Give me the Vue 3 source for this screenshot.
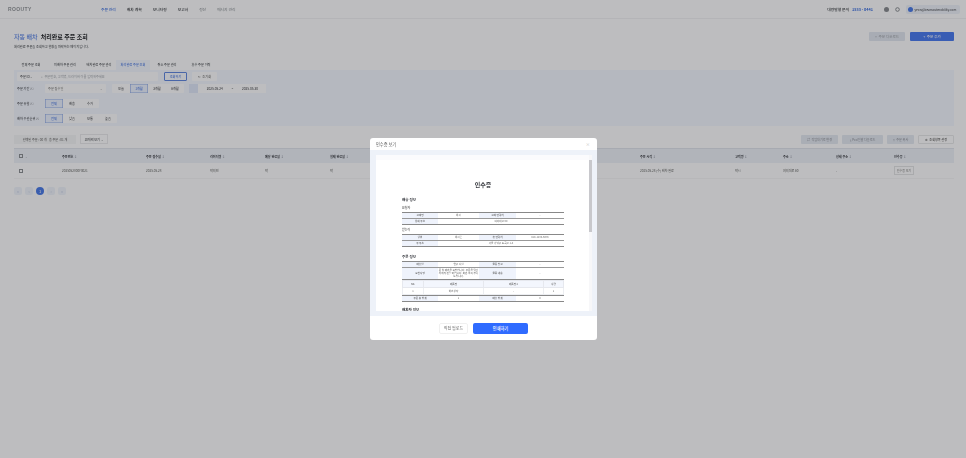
<template>
  <div class="screen">
    <div class="page">
      <header class="topbar">
        <div class="logo">ROOUTY</div>
        <nav class="nav">
          <a v-for="(n, i) in navItems" :key="n" :class="{ on: i === 0, dim: i > 3 }">{{ n }}</a>
        </nav>
        <div class="top-right">
          <span class="call">대량발행 문의 <b>1533 - 0441</b></span>
          <svg class="ico" viewBox="0 0 10 10"><circle cx="5" cy="5" r="5" fill="#8a8d93" /></svg>
          <svg class="ico" viewBox="0 0 10 10"><circle cx="5" cy="5" r="3.6" fill="none" stroke="#8a8d93" stroke-width="2" /></svg>
          <span class="user"><i class="avatar"></i>yeon@bearsoutmobility.com</span>
        </div>
      </header>

      <main class="content">
        <div class="title-row">
          <div>
            <h1><span>자동 배차</span> 처리완료 주문 조회</h1>
            <p>처리완료 주문을 조회하고 현황을 파악하는 페이지입니다.</p>
          </div>
          <div class="title-actions">
            <button class="btn-ghost">+ &nbsp;주문 다운로드</button>
            <button class="btn-primary">+ &nbsp;주문 추가</button>
          </div>
        </div>

        <div class="tabs">
          <span v-for="(t, i) in tabs" :key="t" :class="{ on: i === 3 }">{{ t }}</span>
        </div>

        <section class="filters">
          <div class="row">
            <div class="search">
              <span class="search-key">주문 ID <em>⌄</em></span>
              <span class="search-text">⌕ &nbsp;주문번호, 고객명, 드라이버 이름 입력해주세요</span>
            </div>
            <button class="btn-outline">조회하기</button>
            <button class="btn-reset">↻ &nbsp;초기화</button>
          </div>
          <div class="row">
            <label>주문 기간 ⓘ</label>
            <div class="select">주문 접수일 <em>⌄</em></div>
            <div class="seg">
              <span v-for="(s, i) in periods" :key="s" :class="{ on: i === 1 }">{{ s }}</span>
            </div>
            <div class="dates">
              <i class="cal"></i><span>2025.05.24</span><span>~</span><span>2025.05.30</span>
            </div>
          </div>
          <div class="row">
            <label>주문 유형 ⓘ</label>
            <div class="seg">
              <span v-for="(s, i) in types" :key="s" :class="{ on: i === 0 }">{{ s }}</span>
            </div>
          </div>
          <div class="row">
            <label>배차 우선순위 ⓘ</label>
            <div class="seg">
              <span v-for="(s, i) in priorities" :key="s" :class="{ on: i === 0 }">{{ s }}</span>
            </div>
          </div>
        </section>

        <div class="toolbar">
          <span class="count">선택된 주문 : 00 개 &nbsp; 총 주문 : 01 개</span>
          <span class="per-page">10개씩 보기 ⌄</span>
          <div class="tools">
            <button class="w36">⇄ &nbsp;작업대기로 변경</button>
            <button class="w41">⤓ &nbsp;Pod일괄 다운로드</button>
            <button class="w27">▯ &nbsp;주문 복사</button>
            <button class="plain">⚙ &nbsp;조회항목 설정</button>
          </div>
        </div>

        <div class="grid head">
          <span class="check-cell"><i class="check"></i><em>⌄</em></span>
          <span v-for="c in columns" :key="c">{{ c }} <em>↕</em></span>
        </div>
        <div class="grid body">
          <span class="check-cell"><i class="check"></i></span>
          <span v-for="(c, i) in cells" :key="i">{{ c }}</span>
          <span><button class="view">인수증 보기</button></span>
        </div>

        <div class="pager">
          <span>«</span><span>‹</span><span class="on">1</span><span>›</span><span>»</span>
        </div>
      </main>
    </div>

    <div class="dim-layer"></div>

    <div class="modal">
      <div class="modal-head">
        <span>인수증 보기</span>
        <em>×</em>
      </div>
      <div class="modal-body">
        <div class="paper">
          <h2>인수증</h2>
          <h3 class="first">배송 정보</h3>
          <h4>요청자</h4>
          <table class="t-doc">
            <tr><th>고객명</th><td>박시</td><th>고객 연락처</th><td>-</td></tr>
            <tr><th>상세 주소</th><td colspan="3">여의대로 60</td></tr>
          </table>
          <h4>받는이</h4>
          <table class="t-doc">
            <tr><th>성함</th><td>박시온</td><th>휴 연락처</th><td>010-1234-5678</td></tr>
            <tr><th>주 주소</th><td colspan="3">서울 강남구 도곡로 1-4</td></tr>
          </table>
          <h3 class="gap">주문 정보</h3>
          <table class="t-doc">
            <tr><th>배송일</th><td>연구 시설</td><th>물류 창고</th><td>-</td></tr>
            <tr class="tall"><th>요청사항</th><td>문 앞 배송을 요청합니다. 주문을 담당자에게 전달 바랍니다. 파손 주의 부탁드립니다.</td><th>물품 내용</th><td>-</td></tr>
          </table>
          <table class="t-items">
            <tr><th>No.</th><th>제품명</th><th>제품명 2</th><th>수량</th></tr>
            <tr><td>1</td><td>박스상자</td><td>-</td><td>1</td></tr>
          </table>
          <table class="t-doc t-sum">
            <tr><th>주문 총 합계</th><td>1</td><th>배송 합계</th><td>0</td></tr>
          </table>
          <h3 class="gap2">배차자 정보</h3>
        </div>
        <div class="scrollbar"><i></i></div>
      </div>
      <div class="modal-foot">
        <button class="foot-ghost">직접 업로드</button>
        <button class="foot-main">인쇄하기</button>
      </div>
    </div>
  </div>
</template>

<script setup>
const navItems = ["주문 관리", "배차 계획", "모니터링", "보고서", "정산", "메시지 관리"];
const tabs = ["전체 주문 조회", "미배차 주문 관리", "배차완료 주문 관리", "처리완료 주문 조회", "취소 주문 관리", "휴수 주문 이력"];
const periods = ["오늘", "1개월", "3개월", "6개월"];
const types = ["전체", "배송", "수거"];
const priorities = ["전체", "낮음", "보통", "높음"];
const columns = ["주문번호", "주문 접수일", "라이더명", "예상 완료일", "실제 완료일", "배차 완료일", "배송 시작일", "배송 완료일", "주문 시각", "고객명", "주소", "상세 주소", "인수증"];
const cells = ["2025052800F0021", "2025.05.28", "박의민", "박", "박", "2025.05.28", "2025.05.28", "2025.05.28", "2025.05.28 (수) 배차 완료", "박시", "여의대로 60", "-"];
</script>

<style>
html, body { margin: 0; background: #bcbdc1; }
</style>

<style scoped>
.screen {
  position: relative;
  width: 966px;
  height: 458px;
  overflow: hidden;
  font-family: "Noto Sans CJK KR", "Noto Sans", sans-serif;
  color: #3a3c42;
}
.page {
  width: 966px;
  height: 458px;
  background: #fcfdff;
  filter: blur(0.6px);
}
button { font-family: inherit; border: 0; padding: 0; }
em { font-style: normal; }

.topbar {
  display: flex;
  align-items: center;
  height: 18px;
  padding: 0 6px 0 8px;
  border-bottom: 1px solid #f0f1f4;
  font-size: 3.8px;
}
.logo { width: 93px; font: 700 5px "Liberation Sans", sans-serif; letter-spacing: 0.4px; color: #93969c; }
.nav { display: flex; gap: 11px; font-weight: 500; }
.nav a.on { color: #3d6fe0; }
.nav a.dim { color: #9a9da3; }
.top-right { margin-left: auto; display: flex; align-items: center; gap: 6px; }
.call { margin-right: 5px; font-weight: 500; white-space: nowrap; }
.call b { color: #3d6fe0; margin-left: 2px; }
.ico { width: 5px; height: 5px; }
.user { display: flex; align-items: center; gap: 1.5px; width: 54px; height: 9px; padding: 0 2px; box-sizing: border-box; background: #edf1fa; border-radius: 2px; font-size: 3.1px; white-space: nowrap; overflow: hidden; }
.avatar { width: 5px; height: 5px; flex: none; border-radius: 50%; background: #4d7ce8; }

.content { padding: 0 12px 0 14px; }
.title-row { display: flex; justify-content: space-between; height: 41px; padding-top: 13px; box-sizing: border-box; }
h1 { margin: 0; font-size: 6px; line-height: 9px; font-weight: 700; color: #24262b; }
h1 span { color: #5a83e6; font-weight: 500; margin-right: 2px; }
.title-row p { margin: 3px 0 0; font-size: 3.2px; line-height: 5px; }
.title-actions { display: flex; gap: 5px; }
.btn-ghost { width: 36px; height: 9px; border-radius: 1px; background: #e1e6f0; color: #a2a6ae; font-size: 3.6px; }
.btn-primary { width: 44px; height: 9px; border-radius: 1px; background: #4d7cf0; color: #fff; font-size: 3.6px; }

.tabs { display: flex; height: 10px; font-size: 3.2px; line-height: 10px; }
.tabs span { width: 34px; text-align: center; background: #fcfdff; }
.tabs span.on { color: #3d6fe0; background: #f2f6ff; }

.filters { height: 56px; box-sizing: border-box; padding: 2px 3px 0; background: #f2f6ff; font-size: 3.2px; }
.row { display: flex; align-items: center; height: 9px; margin-bottom: 6px; gap: 6px; }
.row:first-child { margin-bottom: 3px; }
.row label { width: 22px; white-space: nowrap; }
.search { display: flex; align-items: center; width: 141px; height: 9px; background: #fdfdff; border-radius: 1px; }
.search-key { width: 24px; padding-left: 3px; box-sizing: border-box; white-space: nowrap; }
.search-text { color: #a5a9b1; }
.btn-outline { width: 23px; height: 9px; background: #f6f9ff; border: 0.7px solid #6288e0; border-radius: 1px; font-size: 3.2px; color: #3d6fe0; }
.btn-reset { width: 25px; height: 9px; margin-left: -1px; background: #fdfdff; border-radius: 1px; font-size: 3.2px; color: #666; }
.select { display: flex; justify-content: space-between; align-items: center; width: 61px; height: 9px; padding: 0 3px; box-sizing: border-box; background: #fdfdff; border-radius: 1px; color: #777; }
.seg { display: flex; background: #fdfdff; border-radius: 1px; }
.seg span { width: 18px; height: 9px; line-height: 9px; text-align: center; }
.seg span.on { background: #eaf0ff; color: #3d6fe0; box-shadow: inset 0 0 0 0.6px #8fabe8; }
.dates { display: flex; align-items: center; justify-content: space-between; width: 77px; height: 9px; margin-left: -1px; padding-right: 8px; box-sizing: border-box; background: #fdfdff; }
.cal { width: 9px; height: 9px; background: #dfe7fa; }

.toolbar { display: flex; align-items: center; height: 10px; margin-top: 8px; font-size: 3.1px; }
.count { width: 62px; height: 9px; line-height: 9px; text-align: center; background: #f3f4f7; color: #666; white-space: nowrap; }
.per-page { width: 28px; height: 10px; margin-left: 4px; line-height: 10px; text-align: center; border: 0.5px solid #e8e9ec; box-sizing: border-box; }
.tools { margin-left: auto; display: flex; gap: 4px; }
.tools button { height: 9px; border-radius: 1px; background: #e3e8f2; color: #93969f; font-size: 3.1px; white-space: nowrap; }
.tools .w36 { width: 37px; }
.tools .w41 { width: 41px; }
.tools .w27 { width: 27px; }
.tools .plain { width: 36px; background: #fdfdff; color: #444; border: 0.5px solid #e6e7ea; box-sizing: border-box; }

.grid {
  display: grid;
  grid-template-columns: 48px 84px 64px 55px 65px 65px 90px 90px 65px 95px 48px 53px 58px 60px;
  align-items: center;
  font-size: 3.1px;
  white-space: nowrap;
}
.grid.head { height: 15px; margin-top: 4px; background: #ecf0f9; font-weight: 600; border-top: 0.5px solid #dfe3ec; box-sizing: border-box; }
.grid.head em { color: #a2a6b0; }
.grid.body { height: 16px; border-bottom: 0.5px solid #f4f5f7; color: #666; box-sizing: border-box; }
.check-cell { display: flex; align-items: center; gap: 2px; padding-left: 5px; }
.check { width: 4px; height: 4px; box-sizing: border-box; border: 0.5px solid #8d9096; display: block; }
.view { width: 20px; height: 9px; background: #fdfdff; border: 0.5px solid #e2e3e6; font-size: 3px; color: #888; white-space: nowrap; }

.pager { display: flex; gap: 3px; margin-top: 8px; font-size: 4px; }
.pager span { width: 8px; height: 8px; line-height: 8px; text-align: center; border-radius: 2px; background: #eef2fb; color: #bcc7e0; }
.pager span.on { border-radius: 50%; background: #4d7ce8; color: #fff; }

.dim-layer { position: absolute; inset: 0; background: rgba(0, 0, 0, 0.25); }

.modal {
  position: absolute;
  left: 370px;
  top: 138px;
  width: 227px;
  height: 202px;
  display: flex;
  flex-direction: column;
  background: #fff;
  border-radius: 3px;
  overflow: hidden;
}
.modal-head { display: flex; justify-content: space-between; align-items: center; height: 12px; padding: 0 7px 0 6px; font-size: 4.2px; color: #555; flex: none; }
.modal-head span { filter: blur(0.2px); }
.modal-head em { color: #bbb; }
.modal-body { position: relative; height: 166px; flex: none; padding: 5px 8px 5px 6px; box-sizing: border-box; background: #eef2f9; }
.paper { height: 156px; overflow: hidden; padding: 0 25px 0 26px; background: #fff; box-sizing: border-box; border-top: 5px solid #fbfbfd; }
.paper > * { filter: blur(0.25px); }
.paper h2 { margin: 0; padding-top: 19px; text-align: center; font-size: 6px; line-height: 12px; font-weight: 700; }
.paper h3 { margin: 3px 0 0; font-size: 3.6px; line-height: 6px; font-weight: 700; }
.paper h3.first { margin-top: 6px; }
.paper h3.gap { margin-top: 7px; margin-bottom: 1px; }
.paper h3.gap2 { margin-top: 5px; }
.paper h4 { margin: 3px 0 1px; font-size: 3px; line-height: 5px; font-weight: 500; color: #555; }
.paper table { width: 100%; border-collapse: collapse; table-layout: fixed; font-size: 2.6px; color: #666; }
.t-doc { border-top: 0.8px solid #888; border-bottom: 0.8px solid #888; }
.t-doc tr { height: 6px; }
.t-doc th { background: #eff3fc; font-weight: 500; }
.t-doc th:nth-child(1) { width: 36px; }
.t-doc td:nth-child(2) { width: 41px; }
.t-doc th:nth-child(3) { width: 37px; }
.t-doc td { text-align: center; padding: 0; line-height: 3px; vertical-align: middle; }
.t-doc th { padding: 0; line-height: 3px; }
.t-doc tr + tr { border-top: 0.8px solid #999; }
.t-doc .tall { height: 12px; }
.t-items { text-align: center; }
.t-items tr { height: 7px; }
.t-items th { background: #f3f6fd; font-weight: 500; border: 0.4px solid #e6e8ee; padding: 0; }
.t-items th:nth-child(1) { width: 20px; }
.t-items th:nth-child(2) { width: 59px; }
.t-items th:nth-child(3) { width: 59px; }
.t-items td { border: 0.4px solid #eceef2; padding: 0; }
.scrollbar { position: absolute; top: 5px; right: 5px; width: 3px; height: 156px; background: #f7f7f9; }
.scrollbar i { display: block; margin-top: 5px; width: 3px; height: 72px; background: #c8c8cc; }
.modal-foot { flex: 1; display: flex; justify-content: center; align-items: center; gap: 5px; }
.foot-ghost { width: 29px; height: 11px; background: #fff; border: 0.5px solid #f0f0f0; border-radius: 2px; font-size: 4px; color: #666; filter: blur(0.2px); }
.foot-main { width: 55px; height: 11px; background: #2f6bff; border-radius: 2px; font-size: 4.2px; color: #fff; font-weight: 500; }
</style>
